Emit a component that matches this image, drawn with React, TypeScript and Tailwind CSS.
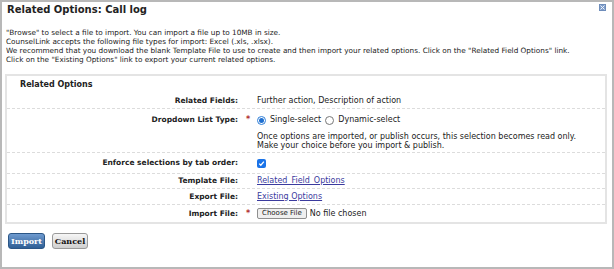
import React from "react";

function Row({
  label,
  req,
  h,
  align = "center",
  last,
  children,
}: {
  label: string;
  req?: boolean;
  h: string;
  align?: "center" | "start";
  last?: boolean;
  children: React.ReactNode;
}) {
  return (
    <div
      className={`flex ${h} ${align === "center" ? "items-center" : "items-start pt-[6px]"} ${
        last ? "" : "border-b border-dashed border-[#dcdcdc]"
      }`}
    >
      <div className="w-[231px] shrink-0 text-right font-bold text-[7.5px] leading-[10px] text-[#222]">
        {label}
      </div>
      <div className="w-[19px] shrink-0 text-center text-[#b03030] font-bold text-[8px] leading-[10px] pl-[1px]">
        {req ? "*" : ""}
      </div>
      <div className="flex-1 text-[8px] leading-[10px] text-[#222]">{children}</div>
    </div>
  );
}

export default function App() {
  return (
    <div className="w-[614px] h-[269px] box-border border-2 border-[#b8b8b8] bg-white font-['DejaVu_Sans',sans-serif] text-[#222] relative">
      <div className="absolute right-[6px] top-[2px] w-[7px] h-[7px] bg-[#7f9ecb] border border-[#6e8dbb] flex items-center justify-center">
        <svg width="5" height="5" viewBox="0 0 5 5">
          <path d="M0.5 0.5 L4.5 4.5 M4.5 0.5 L0.5 4.5" stroke="#eef3fb" strokeWidth="1" />
        </svg>
      </div>
      <div className="pl-[5px] pt-[2px] text-[10px] leading-[12px] font-bold">Related Options: Call log</div>
      <div className="pl-[4px] mt-[12px] text-[7.3px] leading-[9px]">
        "Browse" to select a file to import. You can import a file up to 10MB in size.
        <br />
        CounselLink accepts the following file types for import: Excel (.xls, .xlsx).
        <br />
        We recommend that you download the blank Template File to use to create and then import your related
        options. Click on the "Related Field Options" link.
        <br />
        Click on the "Existing Options" link to export your current related options.
      </div>
      <div className="ml-[3px] mt-[10px] w-[602px] border-2 border-[#e4e4e4]">
        <div className="h-[17px] flex items-center pl-[13px] text-[8px] font-bold leading-[10px]">Related Options</div>
        <Row label="Related Fields:" h="h-[16px]">
          Further action, Description of action
        </Row>
        <Row label="Dropdown List Type:" req h="h-[44px]" align="start">
          <div className="flex items-center h-[10px]">
            <span className="w-[9px] h-[9px] rounded-full border border-[#2f7fd8] flex items-center justify-center bg-white">
              <span className="w-[5px] h-[5px] rounded-full bg-[#1f6fd0]" />
            </span>
            <span className="ml-[4px]">Single-select</span>
            <span className="ml-[4px] w-[9px] h-[9px] rounded-full border border-[#777] bg-white" />
            <span className="ml-[4px]">Dynamic-select</span>
          </div>
          <div className="mt-[7px] leading-[9px]">
            Once options are imported, or publish occurs, this selection becomes read only.
            <br />
            Make your choice before you import &amp; publish.
          </div>
        </Row>
        <Row label="Enforce selections by tab order:" h="h-[21px]">
          <span className="w-[9px] h-[9px] rounded-[2px] bg-[#1a73e8] flex items-center justify-center">
            <svg width="7" height="7" viewBox="0 0 7 7">
              <path d="M1.2 3.6 L2.8 5.2 L5.9 1.6" stroke="white" strokeWidth="1.3" fill="none" />
            </svg>
          </span>
        </Row>
        <Row label="Template File:" h="h-[15px]">
          <a className="text-[#3b3b9e] underline">Related_Field_Options</a>
        </Row>
        <Row label="Export File:" h="h-[16px]">
          <a className="text-[#3b3b9e] underline">Existing Options</a>
        </Row>
        <Row label="Import File:" req h="h-[17px]" last>
          <div className="flex items-center">
            <span className="h-[11px] px-[4px] border border-[#8f8f8f] rounded-[2px] bg-[#efefef] text-[7px] leading-[9px] text-[#222]">
              Choose File
            </span>
            <span className="ml-[3px]">No file chosen</span>
          </div>
        </Row>
      </div>
      <div className="flex gap-[7px] ml-[6px] mt-[9px]">
        <div className="w-[37px] h-[16px] rounded-[3px] border border-[#2b5686] bg-gradient-to-b from-[#6f9bd0] to-[#2f5f95] text-white text-[8px] font-bold flex items-center justify-center font-['DejaVu_Serif',serif]">
          Import
        </div>
        <div className="w-[36px] h-[16px] rounded-[3px] border border-[#9a9a9a] bg-gradient-to-b from-[#f6f6f6] to-[#cfcfcf] text-[#111] text-[8px] font-bold flex items-center justify-center font-['DejaVu_Serif',serif]">
          Cancel
        </div>
      </div>
    </div>
  );
}
